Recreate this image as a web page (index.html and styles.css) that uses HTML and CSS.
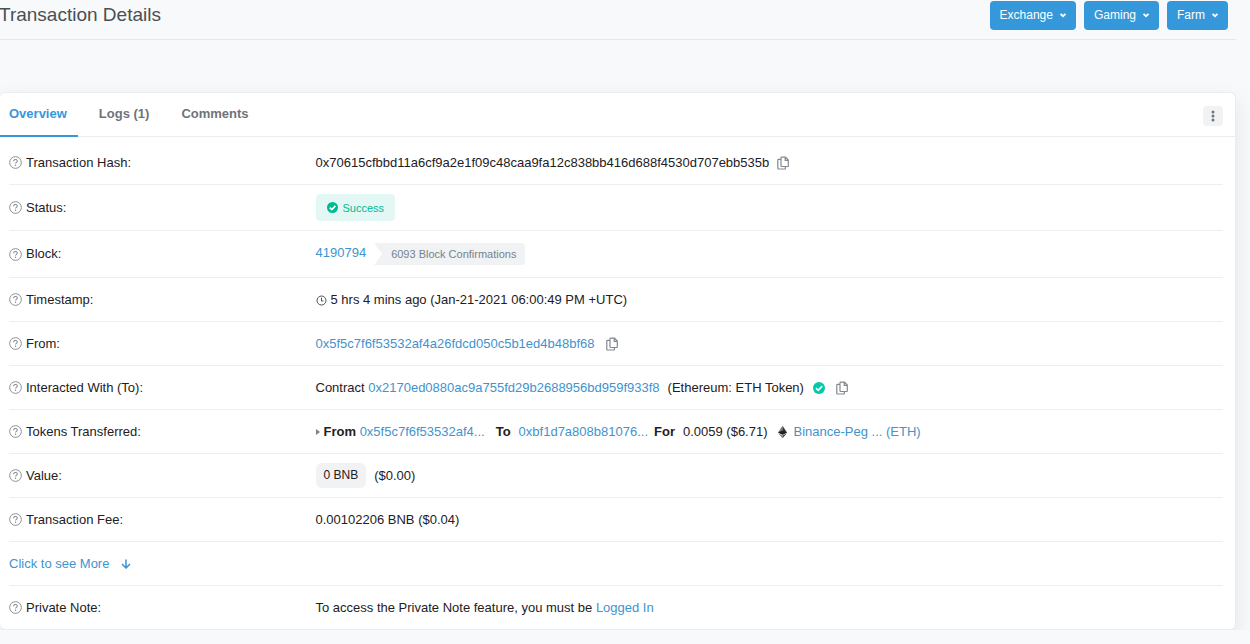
FILE: index.html
```
<!DOCTYPE html>
<html lang="en">
<head>
    <meta charset="utf-8">
    <title>Transaction Details</title>
    <link rel="stylesheet" href="styles.css">
</head>
<body>
    <!-- Shared icons -->
    <svg class="sprite" aria-hidden="true">
        <symbol id="help" viewBox="0 0 14 14">
            <circle cx="7" cy="7" r="6.300" fill="none" stroke="currentColor"/>
            <path d="M5 5.700C5 4.500 5.800 3.800 7 3.800S9 4.500 9 5.500C9 6.800 7 6.800 7 8.200" fill="none" stroke="currentColor" stroke-width="1.100"/>
            <circle cx="7" cy="10" r=".8" fill="currentColor"/>
        </symbol>
        <symbol id="copy" viewBox="0 0 14 14">
            <path d="M5.700 1.200H9.500L12.300 4V9.800a.7.7 0 0 1-.7.7H5.700a.7.7 0 0 1-.7-.7V1.900A.7.7 0 0 1 5.700 1.200z M9.200 1.200V4.300h3.100 M5 3.300H2.500a.7.7 0 0 0-.7.7v8.300a.7.7 0 0 0 .7.700h6.200a.7.7 0 0 0 .7-.7v-1.800" fill="none" stroke="currentColor" stroke-width="1.200"/>
        </symbol>
        <symbol id="check" viewBox="0 0 12 12">
            <circle cx="6" cy="6" r="6" fill="currentColor"/>
            <path d="M3 6.200L5.200 8.300L9.200 4.200" fill="none" stroke="#fff" stroke-width="1.700"/>
        </symbol>
        <symbol id="chevron" viewBox="0 0 8 8">
            <path d="M1.500 2.800L4 5.200L6.500 2.800" fill="none" stroke="currentColor" stroke-width="1.800"/>
        </symbol>
    </svg>

    <header class="page-header">
        <h1>Transaction Details</h1>
        <div class="menu">
            <button class="menu-btn" type="button">Exchange <svg><use href="#chevron"/></svg></button>
            <button class="menu-btn" type="button">Gaming <svg><use href="#chevron"/></svg></button>
            <button class="menu-btn" type="button">Farm <svg><use href="#chevron"/></svg></button>
        </div>
    </header>

    <main class="card">
        <div class="card-header">
            <nav class="tabs">
                <a class="tab active" href="#overview">Overview</a>
                <a class="tab" href="#logs">Logs (1)</a>
                <a class="tab" href="#comments">Comments</a>
            </nav>
            <button class="more-btn" type="button" aria-label="More options">
                <svg viewBox="0 0 4 12"><circle cx="2" cy="2" r="1.500"/><circle cx="2" cy="6" r="1.500"/><circle cx="2" cy="10" r="1.500"/></svg>
            </button>
        </div>

        <div class="details" id="overview">
            <div class="row">
                <div class="label"><svg class="help"><use href="#help"/></svg>Transaction Hash:</div>
                <div class="value">
                    <span>0x70615cfbbd11a6cf9a2e1f09c48caa9fa12c838bb416d688f4530d707ebb535b</span>
                    <button class="copy" type="button" aria-label="Copy hash"><svg><use href="#copy"/></svg></button>
                </div>
            </div>
            <div class="row">
                <div class="label"><svg class="help"><use href="#help"/></svg>Status:</div>
                <div class="value">
                    <span class="status"><svg><use href="#check"/></svg>Success</span>
                </div>
            </div>
            <div class="row">
                <div class="label"><svg class="help"><use href="#help"/></svg>Block:</div>
                <div class="value block">
                    <a href="#block">4190794</a>
                    <span class="confirmations">6093 Block Confirmations</span>
                </div>
            </div>
            <div class="row">
                <div class="label"><svg class="help"><use href="#help"/></svg>Timestamp:</div>
                <div class="value time">
                    <svg viewBox="0 0 12 12"><circle cx="5.500" cy="6.500" r="4.500"/><path d="M5.500 3.700V7H7.500"/></svg>
                    <span>5 hrs 4 mins ago (Jan-21-2021 06:00:49 PM +UTC)</span>
                </div>
            </div>
            <div class="row">
                <div class="label"><svg class="help"><use href="#help"/></svg>From:</div>
                <div class="value">
                    <a href="#from">0x5f5c7f6f53532af4a26fdcd050c5b1ed4b48bf68</a>
                    <button class="copy wide" type="button" aria-label="Copy address"><svg><use href="#copy"/></svg></button>
                </div>
            </div>
            <div class="row">
                <div class="label"><svg class="help"><use href="#help"/></svg>Interacted With (To):</div>
                <div class="value">
                    <span>Contract <a href="#contract">0x2170ed0880ac9a755fd29b2688956bd959f933f8</a></span>
                    <span class="spaced">(Ethereum: ETH Token)</span>
                    <svg class="verified"><use href="#check"/></svg>
                    <button class="copy wide" type="button" aria-label="Copy contract"><svg><use href="#copy"/></svg></button>
                </div>
            </div>
            <div class="row">
                <div class="label"><svg class="help"><use href="#help"/></svg>Tokens Transferred:</div>
                <div class="value tokens">
                    <svg class="caret" viewBox="0 0 4 6"><path d="M0 0L4 3L0 6z"/></svg>
                    <span><b>From</b> <a href="#sender">0x5f5c7f6f53532af4...</a></span>
                    <b class="to">To</b>
                    <a class="spaced" href="#receiver">0xbf1d7a808b81076...</a>
                    <b class="for">For</b>
                    <span class="spaced">0.0059 ($6.71)</span>
                    <svg class="eth" viewBox="0 0 10 14">
                        <path d="M5 0L0 7.500L5 10z" fill="#777"/><path d="M5 0L10 7.500L5 10z" fill="#333"/>
                        <path d="M0 8.500L5 14V11z" fill="#888"/><path d="M10 8.500L5 14V11z" fill="#444"/>
                        <path d="M0 7.500L5 5.400L10 7.500L5 10z" fill="#222"/>
                    </svg>
                    <a href="#token">Binance-Peg ... (ETH)</a>
                </div>
            </div>
            <div class="row">
                <div class="label"><svg class="help"><use href="#help"/></svg>Value:</div>
                <div class="value">
                    <span class="amount">0 BNB</span>
                    <span class="spaced">($0.00)</span>
                </div>
            </div>
            <div class="row">
                <div class="label"><svg class="help"><use href="#help"/></svg>Transaction Fee:</div>
                <div class="value">0.00102206 BNB ($0.04)</div>
            </div>
            <div class="row">
                <a class="see-more" href="#more">Click to see More
                    <svg viewBox="0 0 10 10"><path d="M5 0.500V9M1 5L5 9L9 5"/></svg>
                </a>
            </div>
            <div class="row">
                <div class="label"><svg class="help"><use href="#help"/></svg>Private Note:</div>
                <div class="value"><span>To access the Private Note feature, you must be <a href="#login">Logged In</a></span></div>
            </div>
        </div>
    </main>
</body>
</html>
```

FILE: styles.css
```
* {
    box-sizing: border-box;
}
body {
    margin: 0;
    padding-right: 14px;
    background-color: #f8f9fb;
    color: #1e2022;
    font-family: "Liberation Sans", Arial, sans-serif;
    font-size: 13px;
    line-height: 20px;
}
a {
    color: #3f93cf;
    text-decoration: none;
}
button {
    border: none;
    font-family: inherit;
    cursor: pointer;
}
svg {
    flex: none;
}
.sprite {
    display: none;
}

/* Page header */
.page-header {
    display: flex;
    justify-content: space-between;
    align-items: flex-start;
    height: 40px;
    padding: 1px 8px 0 0;
    border-bottom: 1px solid #e4e8ee;
}
h1 {
    margin: 0 0 0 -1px;
    color: #4a4f55;
    font-size: 19px;
    font-weight: normal;
    line-height: 28px;
}
.menu {
    display: flex;
    gap: 8px;
}
.menu-btn {
    display: flex;
    align-items: center;
    gap: 6px;
    height: 29px;
    padding: 0 9px 2px 10px;
    border-radius: 4px;
    background-color: #3498db;
    color: #fff;
    font-size: 12px;
}
.menu-btn svg {
    width: 8px;
    height: 8px;
}

/* Card and tabs */
.card {
    margin-top: 52px;
    border: 1px solid #e9ecf1;
    border-left: none;
    border-radius: 6px;
    background-color: #fff;
    box-shadow: 0 8px 20px rgba(140, 152, 164, 0.2);
}
.card-header {
    display: flex;
    justify-content: space-between;
    align-items: center;
    padding-right: 12px;
    border-bottom: 1px solid #e9ecf1;
}
.tabs {
    display: flex;
    gap: 10px;
    margin-bottom: -1px;
}
.tab {
    padding: 11px 11px 11px;
    border-bottom: 2px solid transparent;
    color: #6f7378;
    font-weight: bold;
}
.tab.active {
    padding-left: 9px;
    border-color: #3498db;
    color: #3498db;
}
.more-btn {
    display: flex;
    justify-content: center;
    align-items: center;
    width: 20px;
    height: 20px;
    margin-top: 3px;
    padding: 0;
    border-radius: 4px;
    background-color: #f1f2f4;
}
.more-btn svg {
    width: 4px;
    height: 12px;
    fill: #6c757e;
}

/* Detail rows */
.details {
    padding: 4px 12px 0 9px;
}
.row {
    display: flex;
    align-items: center;
    gap: 3px;
    min-height: 44px;
    padding: 9px 0;
    border-bottom: 1px solid #eceef1;
}
.row:last-child {
    min-height: 43px;
    border-bottom: none;
}
.label {
    display: flex;
    align-items: center;
    gap: 4px;
    width: 25%;
}
.help {
    width: 13px;
    height: 13px;
    color: #83898f;
}
.value {
    display: flex;
    align-items: center;
}
.copy {
    display: flex;
    margin-left: 7px;
    padding: 0;
    background: none;
    color: #83898f;
}
.copy.wide {
    margin-left: 10px;
}
.copy svg {
    width: 14px;
    height: 14px;
}
.spaced {
    margin-left: 8px;
}
.status {
    display: flex;
    align-items: center;
    gap: 5px;
    height: 27px;
    padding: 0 11px;
    border-radius: 4px;
    background-color: #e3f8f4;
    color: #00b894;
    font-size: 11px;
}
.status svg {
    width: 11px;
    height: 11px;
}
.block {
    align-items: flex-start;
    height: 28px;
}
.block a {
    margin-top: 3px;
}
.confirmations {
    margin: 3px 0 0 8px;
    padding: 0 9px 0 17px;
    border-radius: 0 4px 4px 0;
    background-color: #f1f2f4;
    clip-path: polygon(0 0, 100% 0, 100% 100%, 0 100%, 8px 50%);
    color: #77838f;
    font-size: 11px;
    line-height: 22px;
}
.time {
    gap: 3px;
}
.time svg {
    width: 12px;
    height: 12px;
    fill: none;
    stroke: #4a4f55;
}
.verified {
    width: 12px;
    height: 12px;
    margin-left: 9px;
    color: #00c9a7;
}
.caret {
    width: 4px;
    height: 6px;
    margin-right: 4px;
    fill: #77838f;
}
.to {
    margin-left: 11px;
}
.for {
    margin-left: 6px;
}
.eth {
    width: 9px;
    height: 14px;
    margin: 0 7px 0 10px;
}
.amount {
    padding: 0 8px;
    border-radius: 6px;
    background-color: #f1f2f4;
    font-size: 12px;
    line-height: 25px;
}
.see-more {
    display: flex;
    align-items: center;
    gap: 12px;
}
.see-more svg {
    width: 10px;
    height: 10px;
    fill: none;
    stroke: currentColor;
    stroke-width: 1.5;
}
```
